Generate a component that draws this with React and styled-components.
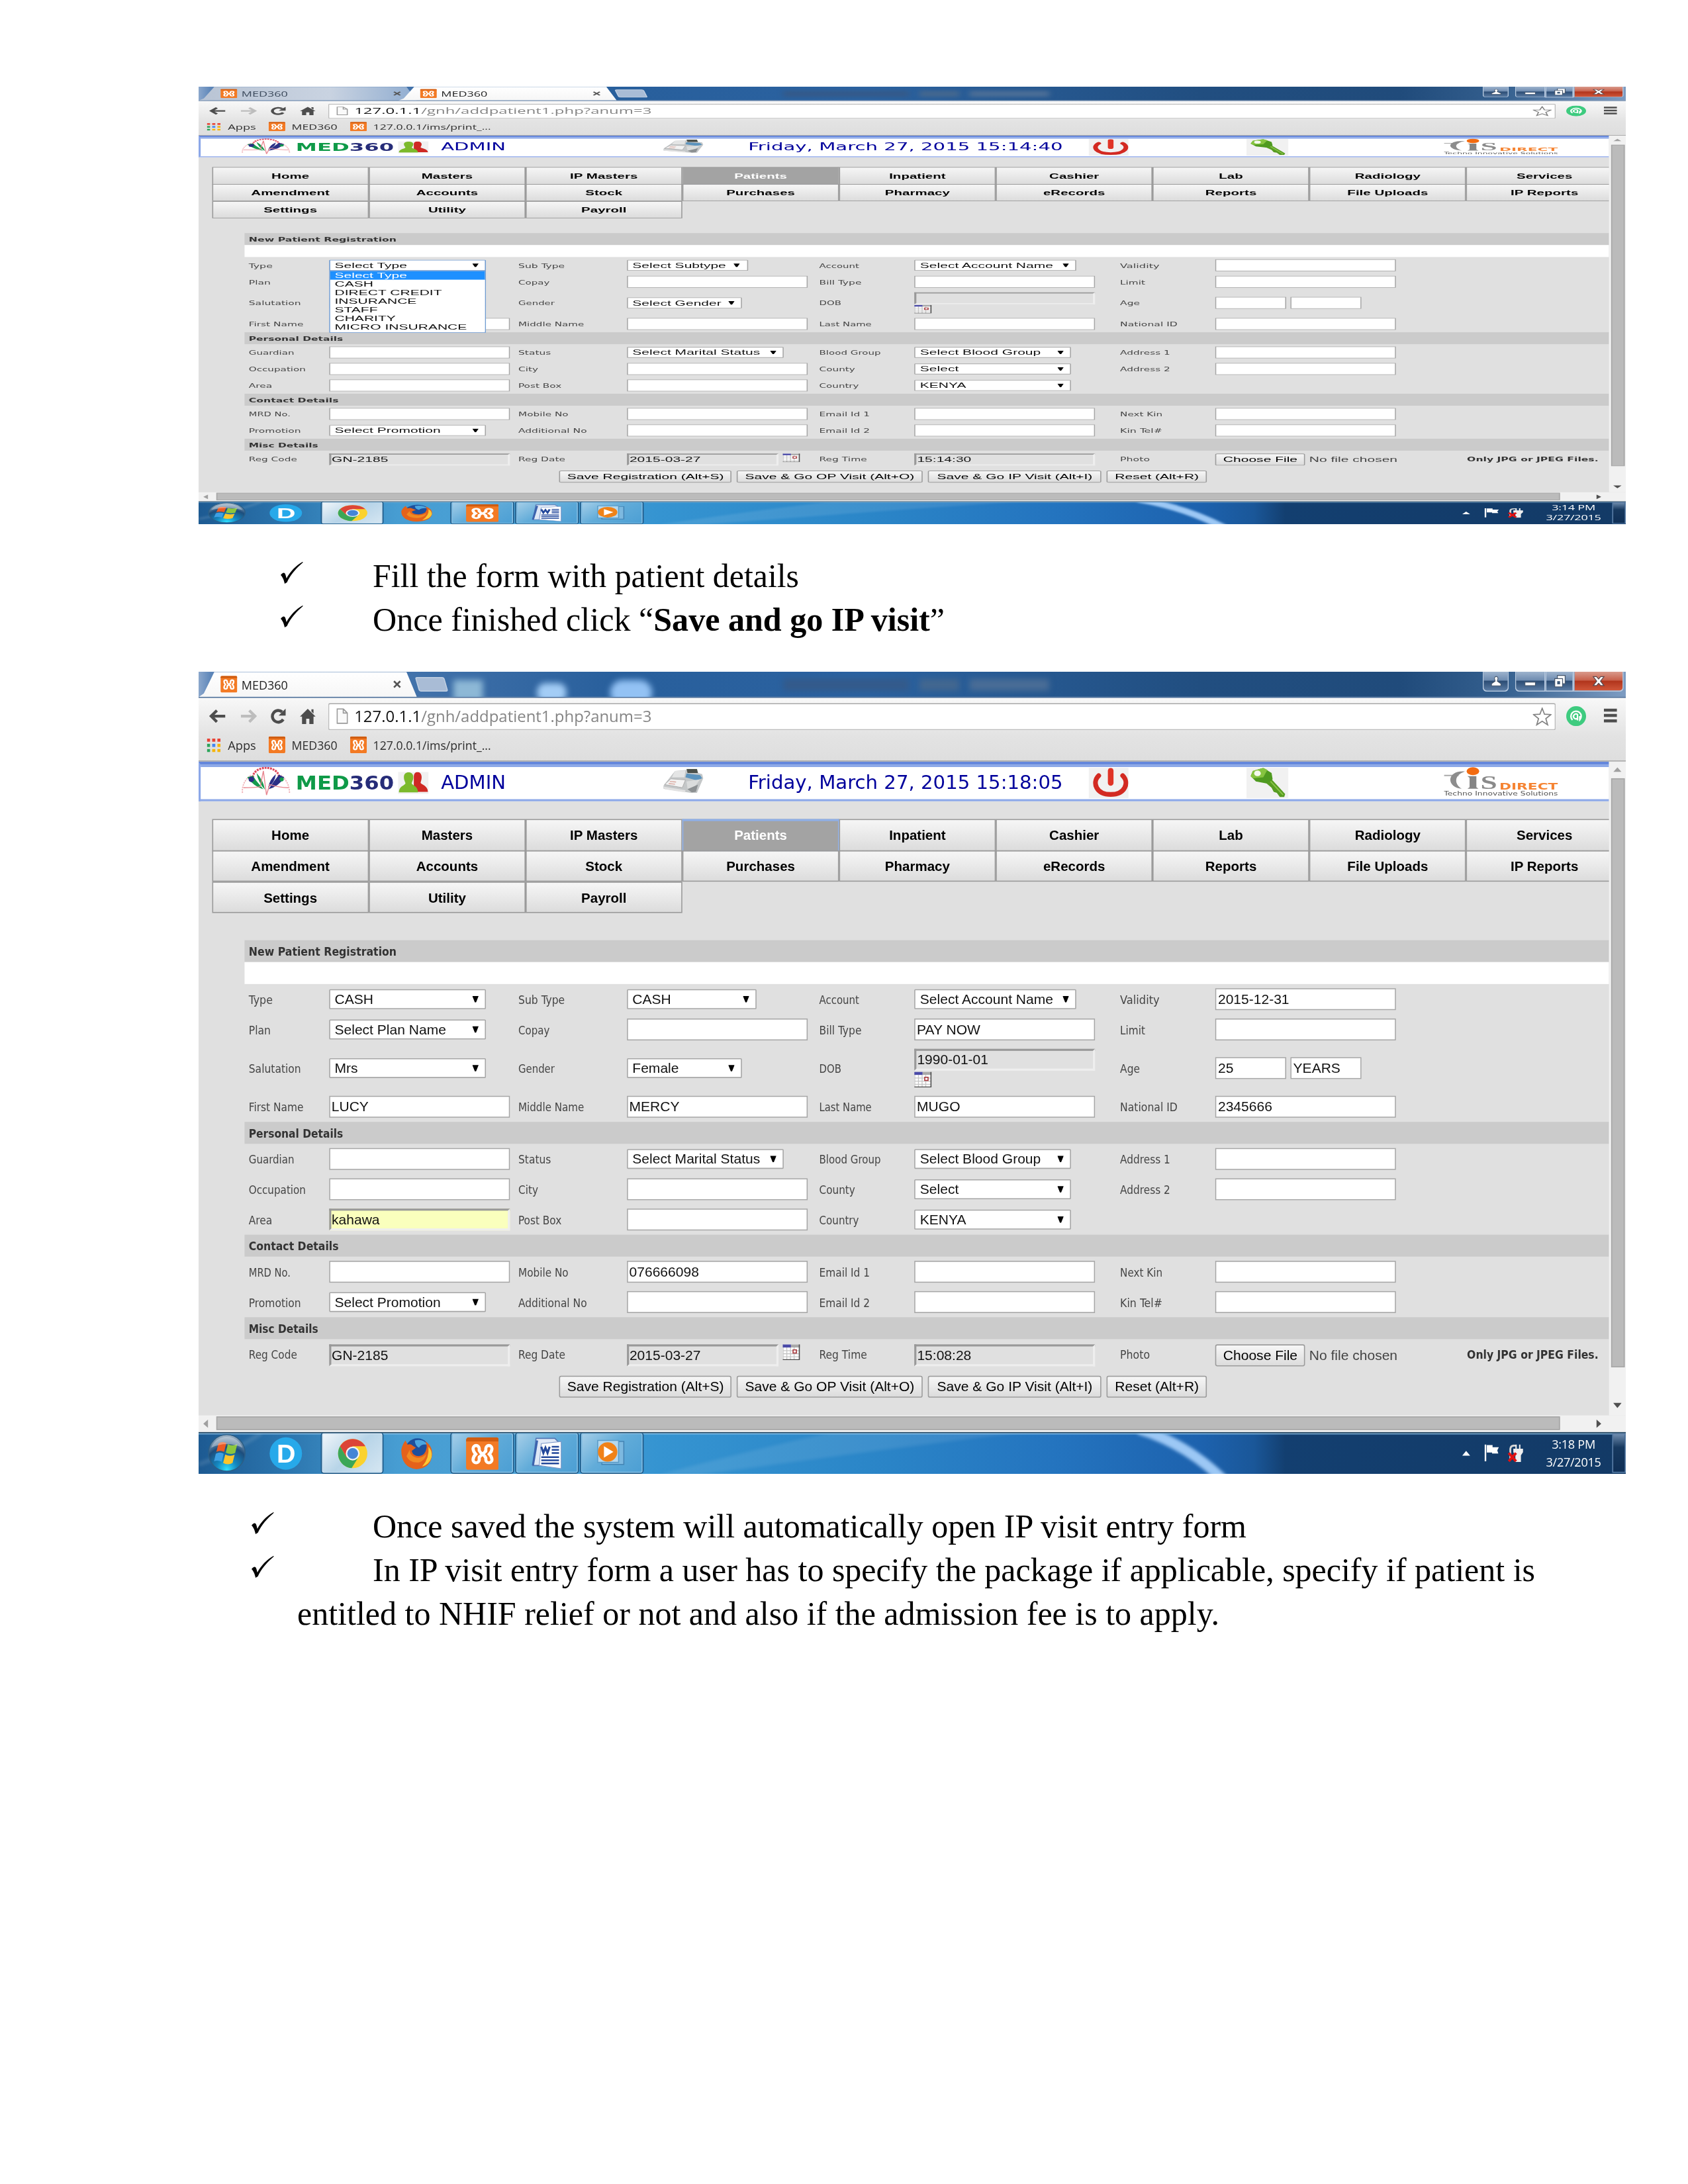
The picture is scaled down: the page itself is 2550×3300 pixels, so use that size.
import React, { useLayoutEffect, useRef } from "react";
import styled, { createGlobalStyle, css } from "styled-components";

const UI = '"Open Sans", "Noto Sans", sans-serif';
const ARIAL = '"Liberation Sans", Arial, sans-serif';
const TAHOMA = '"DejaVu Sans Condensed", "DejaVu Sans", sans-serif';
const VERDANA = '"DejaVu Sans", Verdana, sans-serif';

const GlobalStyle = createGlobalStyle`
  body { margin: 0; background: #fff; }
  *, *::before, *::after { box-sizing: border-box; }
  svg { display: block; }
`;

/* ---------- text fitted to a given width ---------- */
const FitBox = styled.span`
  display: inline-block;
  flex: none;
  width: ${(p) => p.$w}px;
  white-space: nowrap;
`;
const FitInner = styled.span`
  display: inline-block;
  transform-origin: 0 50%;
`;
function Fit({ w, children }) {
  const outer = useRef(null);
  const inner = useRef(null);
  useLayoutEffect(() => {
    inner.current.style.transform = "none";
    const ratio =
      outer.current.getBoundingClientRect().width /
      inner.current.getBoundingClientRect().width;
    inner.current.style.transform = `scaleX(${ratio})`;
  });
  return (
    <FitBox ref={outer} $w={w}>
      <FitInner ref={inner}>{children}</FitInner>
    </FitBox>
  );
}

/* ---------- document page ---------- */
const Page = styled.main`
  width: 2550px;
  height: 3300px;
  padding: 131px 0 0 300px;
  background: #fff;
  overflow: hidden;
`;
const Frame = styled.section`
  width: 2156px;
  height: ${(p) => p.$h}px;
  overflow: hidden;
`;
const Screen = styled.div`
  width: 1366px;
  height: 768px;
  display: flex;
  flex-direction: column;
  transform-origin: 0 0;
  transform: scale(${2156 / 1366}, ${(p) => p.$h / 768});
  background: #e0e0e0;
  line-height: normal;
`;
const Notes = styled.div`
  margin: ${(p) => p.$mt}px 0 ${(p) => p.$mb}px;
  font: 50px/66.2px "Liberation Serif", "Times New Roman", serif;
  color: #000;
`;
const Note = styled.div`
  display: flex;
  padding-left: ${(p) => p.$indent}px;
  height: 66.2px;
`;
const Mark = styled.div`
  width: ${(p) => p.$w}px;
  padding-top: 12px;
`;
const Tick = () => (
  <svg width="35" height="33" viewBox="0 0 35 33">
    <path d="M0 20C2 17 4.500 15.500 6 17C7.300 18.500 7.800 21 8.800 25C14 15 23 5.500 33 0L33.800 .8C24 9 15 19 9.500 31L6 33C5 28 3 22.500 0 20Z" />
  </svg>
);

/* ---------- title bar and tabs ---------- */
const TitleBar = styled.div`
  position: relative;
  flex: none;
  height: 25.300px;
  display: flex;
  align-items: flex-end;
  justify-content: space-between;
  overflow: hidden;
  border-bottom: 1px solid #4c6f9a;
  background: linear-gradient(90deg, #8ba7cc 0, #5c85b8 12px, #285f9c 400px, #2b62a0 640px, #214e80 960px, #204b7b 1150px, #35608f 1250px, #7d9cc2 1366px);
`;
const Tabs = styled.div`
  display: flex;
  z-index: 1;
`;
const Tab = styled.div`
  width: 209px;
  height: 24px;
  margin-right: -17.700px;
  padding: 0 15.500px 0 20.500px;
  display: flex;
  align-items: center;
  font: 12px ${UI};
  color: ${(p) => (p.$on ? "#222" : "#3c4a5c")};
  background: ${(p) =>
    p.$on ? "linear-gradient(#fff, #f6f6f6)" : "linear-gradient(90deg, #b9c4d4, #c9d3e1 60%, #8facd0)"};
  clip-path: polygon(15px 0, 199px 0, 209px 100%, 0 100%, 5px 85%);
  z-index: ${(p) => (p.$on ? 1 : 0)};
`;
const TabTitle = styled.span`
  flex: 1;
  margin-left: 4px;
`;
const NewTab = styled.div`
  width: 28px;
  height: 14px;
  margin: 5px 0 0 17.500px;
  background: #a9bcd6;
  border: 1px solid #c2d0e2;
  border-radius: 2px;
  transform: skewX(16deg);
`;
const Ghost = styled.div`
  position: absolute;
  left: ${(p) => p.$x}px;
  top: ${(p) => p.$y}px;
  width: ${(p) => p.$w}px;
  height: ${(p) => p.$h}px;
  background: ${(p) => p.$c};
  border-radius: ${(p) => p.$r || 0}px;
  filter: blur(3px);
`;
const WindowButtons = styled.div`
  position: absolute;
  right: 2px;
  top: 0;
  height: 18.600px;
  display: flex;
`;
const WinButton = styled.div`
  width: ${(p) => p.$w}px;
  margin-right: ${(p) => p.$gap || 0}px;
  display: flex;
  align-items: center;
  justify-content: center;
  border: 1px solid #b9cadf;
  border-top: 0;
  border-radius: ${(p) => p.$r};
  background: ${(p) =>
    p.$red
      ? "linear-gradient(#d99a8c 0, #c8614c 45%, #b1341c 50%, #d0573a)"
      : "linear-gradient(#9db3cd 0, #6f8cb0 45%, #2b4c74 50%, #5b7ca4)"};
`;

/* ---------- toolbar and bookmarks ---------- */
const Toolbar = styled.div`
  flex: none;
  height: 60.300px;
  border-bottom: 1.500px solid #a0a0a0;
  background: linear-gradient(#f8f8f8, #e3e3e3 36px, #dedede);
`;
const NavRow = styled.div`
  height: 34px;
  display: grid;
  grid-template-columns: 30px 28.200px 29.300px 26.700px 1175.700px 9.300px 36.300px 13px;
  align-items: center;
  padding-left: 9.500px;
`;
const AddressBar = styled.div`
  height: 26.500px;
  margin-top: 1px;
  padding: 0 3px 0 7px;
  display: flex;
  align-items: center;
  border: 1px solid #bcbcbc;
  border-top-color: #a2a2a2;
  border-radius: 2px;
  background: #fff;
  font: 15.300px ${UI};
  color: #858585;
  b { font-weight: 400; color: #111; }
`;
const Url = styled.div`
  flex: 1;
  margin: -1px 0 0 6.800px;
`;
const Bookmarks = styled.div`
  display: flex;
  align-items: center;
  height: 22px;
  padding-left: 8.200px;
  font: 12px ${UI};
  color: #2c2c2c;
`;
const Bookmark = styled.div`
  display: flex;
  align-items: center;
  gap: ${(p) => p.$gap || 5.6}px;
  margin-right: 12.400px;
`;

/* ---------- page area ---------- */
const Viewport = styled.div`
  flex: none;
  height: 626.100px;
  display: flex;
`;
const Content = styled.div`
  width: 1350px;
  overflow: hidden;
`;
const Banner = styled.div`
  height: 38px;
  display: grid;
  grid-template-columns: 51.800px 97.800px 41px 212.800px 81.600px 326.500px 150.300px 189px 109px;
  align-items: center;
  padding-left: 39px;
  border-left: 2px solid #8ca8e8;
  border-top: 3.500px solid #6487dc;
  border-bottom: 2.600px solid ${(p) => (p.$soft ? "#a5b9ee" : "#8ca8e8")};
  box-shadow: inset 0 2.200px #8ca8e8;
  background-color: #fff;
  font: 18px ${VERDANA};
  color: #00009c;
`;
const Brand = styled.div`
  font: bold 17.500px ${VERDANA};
  color: #262c78;
  padding-top: 3px;
  i { font-style: normal; color: #0f9a48; }
`;
const IconPlate = styled.div`
  width: ${(p) => p.$w}px;
  height: ${(p) => p.$h || 29}px;
  margin-top: 2px;
  display: flex;
  align-items: center;
  justify-content: ${(p) => (p.$end ? "flex-end" : "center")};
  background: #f1f1f1;
`;
const Menu = styled.nav`
  margin: 17.500px 0 26.500px 12.500px;
  width: 1352px;
  display: grid;
  grid-template-columns: repeat(9, 150.050px);
  grid-auto-rows: 29.900px;
`;
const MenuItem = styled.div`
  margin: 0 -0.600px -0.600px 0;
  display: flex;
  align-items: center;
  justify-content: center;
  border: 1.200px solid #9a9a9a;
  font: bold 13px ${ARIAL};
  color: #000;
  background: linear-gradient(#f6f6f6, #dcdcdc);
  ${(p) =>
    p.$on &&
    css`
      color: #fff;
      background: #a3a3a3;
      border-color: ${p.$focus ? "#8fb0e8" : "#a9a9a9"};
      border-top-width: ${p.$focus ? 2.5 : 1.2}px;
      border-bottom-color: #8a93a6;
    `}
`;
const Form = styled.div`
  margin-left: 44px;
  font: 11px ${TAHOMA};
  color: #454545;
`;
const Section = styled.div`
  height: 20.900px;
  padding: 0.800px 0 0 4px;
  display: flex;
  align-items: center;
  background: #cbcbcb;
  font-weight: bold;
  color: #333;
`;
const Blank = styled.div`
  height: 20.900px;
  background: #fff;
`;
const Row = styled.div`
  height: ${(p) => p.$h || 29.1}px;
  display: grid;
  grid-template-columns: 81px 177px 108px 180px 95.300px 193px 95.200px 237px 139px;
  align-items: center;
`;
const Label = styled.div`
  padding: 1.200px 0 0 4px;
`;
const Cell = styled.div`
  position: relative;
  display: flex;
  flex-direction: ${(p) => (p.$stack ? "column" : "row")};
  align-items: ${(p) => (p.$top || p.$stack ? "flex-start" : "center")};
  gap: ${(p) => (p.$stack ? "1px" : "4px")};
  font: 13.330px ${ARIAL};
  color: #111;
`;
const Input = styled.div`
  width: ${(p) => p.$w || 172.8}px;
  height: 20.900px;
  padding-left: 1.200px;
  display: flex;
  align-items: center;
  border: 1.200px solid #a6a6a6;
  background: #fff;
  ${(p) =>
    p.$inset &&
    css`
      border: 2px solid #999;
      border-right-color: #eee;
      border-bottom-color: #eee;
      padding-left: 0.400px;
      background: ${p.$fill || "#e0e0e0"};
    `}
`;
const SelectBox = styled.div`
  width: ${(p) => p.$w}px;
  height: 18.800px;
  padding: 0 6.500px 0 4.200px;
  display: flex;
  align-items: center;
  justify-content: space-between;
  border: 1.100px solid ${(p) => (p.$open ? "#6f9bd1" : "#a6a6a6")};
  border-radius: 1px;
  background: #fff;
  white-space: nowrap;
`;
const Options = styled.div`
  position: absolute;
  left: 0;
  top: 19px;
  z-index: 5;
  width: 150px;
  padding-bottom: 1px;
  border: 1px solid #6f9bd1;
  background: #fff;
`;
const Option = styled.div`
  height: 15.050px;
  line-height: 15.050px;
  padding-left: 4.200px;
  white-space: nowrap;
  color: ${(p) => (p.$on ? "#fff" : "#111")};
  background: ${(p) => (p.$on ? "#1e90ff" : "#fff")};
`;
const Button = styled.div`
  width: ${(p) => p.$w}px;
  height: 20.900px;
  display: flex;
  align-items: center;
  justify-content: center;
  border: 1.200px solid #9c9c9c;
  border-radius: 2px;
  background: linear-gradient(#f7f7f7, #dcdcdc);
  font: 13.330px ${ARIAL};
  color: #000;
  white-space: nowrap;
`;
const Actions = styled.div`
  display: flex;
  gap: 4.500px;
  padding: 4.500px 0 0 301.300px;
`;
const FileStatus = styled.span`
  color: #444;
  white-space: nowrap;
`;
const Strong = styled.div`
  padding: 1.200px 0 0 4px;
  font: bold 11px ${TAHOMA};
  color: #333;
`;

/* ---------- scroll bars ---------- */
const VScroll = styled.div`
  width: 16px;
  display: flex;
  flex-direction: column;
  align-items: center;
  background: #f1f1f1;
`;
const VThumb = styled.div`
  width: 13px;
  height: 564px;
  margin: 6px 0 33px;
  border: 1px solid #a6a6a6;
  background: #bbb;
`;
const HScroll = styled.div`
  flex: none;
  height: 16px;
  display: flex;
  align-items: center;
  padding-left: 2.500px;
  background: #f1f1f1;
`;
const HThumb = styled.div`
  width: 1285.500px;
  height: 12.800px;
  margin: 0 34px 0 6.500px;
  border: 1px solid #a6a6a6;
  background: #bbb;
`;

/* ---------- taskbar ---------- */
const Taskbar = styled.div`
  position: relative;
  flex: 1;
  display: flex;
  align-items: center;
  overflow: hidden;
  border-top: 1.600px solid #1f4460;
  background: linear-gradient(90deg, #1d5a92 0, #2b74ad 80px, #479dd2 190px, #4ba2d6 320px, #3594d1 440px, #2b86c8 640px, #2474bf 820px, #1d62ae 960px, #1a5799 1010px, #133f70 1040px, #133a66 1366px);
`;
const TaskGlow = styled.svg`
  position: absolute;
  left: 0;
  top: 0;
`;
const TaskItem = styled.div`
  position: relative;
  width: ${(p) => p.$w}px;
  height: 38px;
  margin-right: ${(p) => p.$gap || 0}px;
  display: flex;
  align-items: center;
  justify-content: center;
  ${(p) =>
    p.$tile &&
    css`
      border: 1px solid ${p.$active ? "#dbeaf5" : "#8cc3e6"};
      outline: 0.600px solid #1d5683;
      border-radius: 2px;
      background: ${p.$active
        ? "linear-gradient(135deg, #f1f6fa, #b7d4e8 50%, #d5e6f2)"
        : "linear-gradient(135deg, #a5cee8, #62acd9 45%, #4c9fd4)"};
    `}
`;
const Tray = styled.div`
  position: relative;
  flex: 1;
  display: flex;
  align-items: center;
  justify-content: flex-end;
`;
const Clock = styled.div`
  width: 69px;
  margin-left: 13px;
  padding-top: 1px;
  text-align: center;
  font: 11.500px/16.900px ${UI};
  letter-spacing: -0.200px;
  color: #fff;
`;
const ShowDesktop = styled.div`
  width: 13.500px;
  height: 38px;
  margin-left: 2px;
  border: 1px solid #5b7fa8;
  background: linear-gradient(#6f8cae, #17395f 35%, #0f2f56);
`;

/* ---------- icons ---------- */
const Xampp = ({ s = 16 }) => (
  <svg width={s} height={s} viewBox="0 0 16 16">
    <rect width="16" height="16" rx="1.400" fill="#f37a24" />
    <path d="M0 1.400A1.400 1.400 0 0 1 1.400 0H14.600A1.400 1.400 0 0 1 16 1.400V2H0Z" fill="#d05c10" />
    <path
      d="M6.400 6.400V5.500a1.500 1.500 0 0 0-3 0c0 1.200.5 1.900 1.300 2.700-.8.800-1.300 1.500-1.300 2.700a1.500 1.500 0 0 0 3 0V9.600M9.600 6.800V5.500a1.500 1.500 0 0 1 3 0c0 1.200-.5 1.900-1.300 2.700.8.800 1.300 1.500 1.300 2.700a1.500 1.500 0 0 1-3 0V10M6.400 6.300C7 8.200 9 8.200 9.600 10.100M6.400 10C7 8.200 9 8.200 9.600 6.300"
      fill="none" stroke="#fff" strokeWidth="1.500" strokeLinecap="round"
    />
  </svg>
);
const Cross = () => (
  <svg width="8" height="8" viewBox="0 0 8 8">
    <path d="M1 1L7 7M7 1L1 7" stroke="#555" strokeWidth="1.700" />
  </svg>
);
const Arrow = ({ back }) => (
  <svg width="16" height="13" viewBox="0 0 16 13">
    <path
      d={back ? "M7.500 1L2 6.500L7.500 12M2.500 6.500H15.500" : "M8.500 1L14 6.500L8.500 12M13.500 6.500H.5"}
      fill="none" stroke={back ? "#4d4d4d" : "#bdbdbd"} strokeWidth="2.700"
    />
  </svg>
);
const Reload = () => (
  <svg width="16" height="15" viewBox="0 0 16 15">
    <path d="M13 10.600A5.600 5.600 0 1 1 12 3.500" fill="none" stroke="#4d4d4d" strokeWidth="2.800" />
    <path d="M15.300 .3V7H8.600Z" fill="#4d4d4d" />
  </svg>
);
const HomeIcon = () => (
  <svg width="15" height="15" viewBox="0 0 15 15">
    <path d="M7.500 .5L15 8H13V15H9V10H6V15H2V8H0ZM11 1H13V5L11 3Z" fill="#4d4d4d" />
  </svg>
);
const Doc = () => (
  <svg width="11" height="15" viewBox="0 0 11 15">
    <path d="M.6 .6H6.500L10.400 4.500V14.400H.6ZM6.500 .6V4.500H10.400" fill="#fafafa" stroke="#9a9a9a" strokeWidth="1.100" />
  </svg>
);
const StarIcon = () => (
  <svg width="18" height="18" viewBox="0 0 18 18">
    <path d="M9 1L11.200 6.700L17.300 7L12.500 10.800L14.200 16.800L9 13.400L3.800 16.800L5.500 10.800L.7 7L6.800 6.700Z" fill="#fff" stroke="#828282" strokeWidth="1.100" />
  </svg>
);
const GreenDot = () => (
  <svg width="19" height="19" viewBox="0 0 19 19">
    <circle cx="9.500" cy="9.500" r="9.500" fill="#3ecb7f" />
    <path d="M6 13.200A4.900 4.900 0 1 1 13 13V9.500" fill="none" stroke="#fff" strokeWidth="1.500" />
    <path d="M10.800 7.500V13.500M10.800 8A2.300 2.300 0 1 0 10.800 11.500" fill="none" stroke="#fff" strokeWidth="1.400" />
  </svg>
);
const Burger = () => (
  <svg width="13" height="14" viewBox="0 0 13 14">
    <path d="M0 1.700H12.500M0 6.800H12.500M0 12H12.500" stroke="#4f4f4f" strokeWidth="2.900" />
  </svg>
);
const AppsIcon = () => (
  <svg width="13" height="13" viewBox="0 0 13 13">
    {["#e94335", "#e94335", "#e94335", "#2ca45a", "#4386f4", "#f6b50b", "#2ca45a", "#f6b50b", "#f6b50b"].map((c, i) => (
      <rect key={i} x={(i % 3) * 5} y={Math.floor(i / 3) * 5} width="3" height="3" fill={c} />
    ))}
  </svg>
);
const UserGlyph = () => (
  <svg width="10" height="10" viewBox="0 0 10 10">
    <path d="M3.300 2.500a1.700 2 0 1 1 3.400 0L6 5L9.500 7.500V9.500H.5V7.500L4 5Z" fill="#fff" stroke="#46566c" strokeWidth=".7" />
  </svg>
);
const MinGlyph = () => (
  <svg width="11" height="10" viewBox="0 0 11 10">
    <rect x=".5" y="6" width="10" height="3.300" fill="#fff" stroke="#46566c" strokeWidth=".7" />
  </svg>
);
const MaxGlyph = () => (
  <svg width="12" height="12" viewBox="0 0 12 12">
    <path d="M3.500 .5H11V8.500H8.500V11.500H1V3.500H3.500Z" fill="#fff" stroke="#46566c" strokeWidth=".8" />
    <rect x="3.400" y="6" width="2.700" height="3" fill="#3d5878" />
    <path d="M3.500 3.500H8.500V8.500" fill="none" stroke="#46566c" strokeWidth=".8" />
  </svg>
);
const CloseGlyph = () => (
  <svg width="12" height="10" viewBox="0 0 12 10">
    <path d="M.8 .7H4L6 3L8 .7H11.200L7.800 5L11.200 9.300H8L6 7L4 9.300H.8L4.200 5Z" fill="#fff" stroke="#5c4a50" strokeWidth=".8" />
  </svg>
);
const Caret = () => (
  <svg width="6" height="7" viewBox="0 0 6 7">
    <path d="M0 .5H6L3.600 6.500H2.400Z" fill="#000" />
  </svg>
);
const Calendar = () => (
  <svg width="16.500" height="15.200" viewBox="0 0 16.500 15.200">
    <rect width="16.500" height="15.200" fill="#fff" />
    <path d="M.5 0V15M4 3V15M7.500 3V15M11 3V15M0 6H16M0 9H16M0 12H16" stroke="#c4c4c4" strokeWidth=".8" />
    <rect width="8" height="3" fill="#4a4aa8" />
    <rect x="8" width="8.500" height="3" fill="#a9a9a9" />
    <rect x="10" y="5.300" width="3.200" height="3" fill="#fff" stroke="#a8383c" />
    <path d="M16 0V14.700H0" fill="none" stroke="#4a4a4a" />
  </svg>
);
const MedLogo = () => (
  <svg width="47" height="28" viewBox="0 0 47 28">
    <path d="M11 10A12.500 9 0 0 1 36 10" fill="none" stroke="#e0475a" strokeWidth="2" strokeDasharray="1.800 .8" />
    <path d="M1 25Q0 15 9 8M46 25Q46 15 38 8" fill="none" stroke="#f0b4ba" strokeWidth="1.200" strokeDasharray="1.500 .8" />
    <path d="M5.500 10L11 8.500L14 13L21 21.500Q12 19 5.500 10Z" fill="#159a4e" />
    <path d="M14.500 6Q21 13 22.500 22Q16 15 14.500 6Z" fill="#159a4e" />
    <path d="M41 10L36 7.500L31 14L26 21.500Q36 18.500 41 10Z" fill="#2b2f86" />
    <path d="M33 7Q27 12 25.500 20Q32 15 33 7Z" fill="#2b2f86" />
    <circle cx="9.500" cy="12" r="2.600" fill="#2b2f86" />
    <circle cx="38.500" cy="12" r="2" fill="#159a4e" />
    <path d="M2 20Q12 20 18 19L21 4L24 27L27 17Q36 20 45 20" fill="none" stroke="#e88690" strokeWidth=".9" />
  </svg>
);
const People = () => (
  <svg width="29" height="20" viewBox="0 0 29 20">
    <path d="M15 4.500C15 1.600 16.600 0 18.500 0C20.500 0 22.500 1.600 22.500 5C22.500 7.500 21.500 9 21.500 10.500C22 12 28.500 13 28.500 19H15Z" fill="#cf2a24" />
    <path d="M5.500 5C5.500 1.700 7.500 .3 10 .3S14.500 1.700 14.500 5C14.500 8 13 9.500 13 11C13.500 13 19 13.500 19 19.500H.7C.7 13.500 6.500 13 7 11C7 9.500 5.500 8 5.500 5Z" fill="#7cba2c" />
  </svg>
);
const Fax = () => (
  <svg width="40" height="24" viewBox="0 0 40 24">
    <path d="M12 2L24 1L38 5L39 9L33 23L27 23L1 19L1 16Z" fill="#c4c7c8" />
    <path d="M12 2L22 1.500L21 8L9 8Z" fill="#e4e5e5" />
    <path d="M23 0H33L34 4L24 4Z" fill="#4b504a" />
    <path d="M23 4.500L36 6L38 9L33 11L22 8Z" fill="#5b93bd" />
    <path d="M8 9.500L22 10.500L19 18L2 15Z" fill="#f3f3f3" stroke="#a9a9a9" strokeWidth=".6" />
    <path d="M7 12L13 12.600M6 14L12 14.700" stroke="#dcb0a8" strokeWidth="1" />
    <path d="M23 12L36 10L31 17L24 19Z" fill="#dadcdc" />
    <path d="M24 19.500L34 15L32 22L28 22.500Z" fill="#8c9092" />
    <path d="M1 17L22 20.500L21.500 22.500L2 19.500Z" fill="#e2e2e2" />
  </svg>
);
const Power = () => (
  <svg width="34" height="28" viewBox="0 0 34 28">
    <path d="M5.500 7.500C-1 14 3 25.500 17 25.500S35 14 28.500 7.500" fill="none" stroke="#d32a22" strokeWidth="4.600" strokeLinecap="round" />
    <path d="M17 2.700V14.500" stroke="#e03427" strokeWidth="5.400" strokeLinecap="round" />
  </svg>
);
const Key = () => (
  <svg width="36" height="28" viewBox="0 0 36 28">
    <path d="M22 11L35 25L34 28H30L27 24L24 23L22 19L16 14Z" fill="#579c22" />
    <path d="M4 3L14 0L22 5L23 11L17 15L7 13L2 8Z" fill="#4f9a20" />
    <path d="M4 3L14 0L18 2L14 9L4 10L2 8Z" fill="#86c440" />
    <ellipse cx="8.500" cy="5.300" rx="3.200" ry="2.700" fill="#f4f9ee" />
    <path d="M21 13L33 26" stroke="#8cc64a" strokeWidth="1.200" />
  </svg>
);
const CisLogo = () => (
  <svg width="110" height="29" viewBox="0 0 110 29">
    <path d="M0 8.300H14" stroke="#a9a9a9" strokeWidth="1.200" />
    <path d="M20 4.500C2 3 2 20 17 21C10 17 9 8 20 4.500Z" fill="#8d8d8d" />
    <ellipse cx="27.700" cy="4.200" rx="6" ry="3.800" fill="#f36b10" />
    <path d="M22.500 9H31V19.500L33 21H22.500L24.500 19.500V10.500Z" fill="#858585" />
    <text x="35" y="21" fontFamily="Liberation Serif, serif" fontWeight="bold" fontSize="19" textLength="16" lengthAdjust="spacingAndGlyphs" fill="#8a8a8a">S</text>
    <text x="53" y="21.500" fontFamily="DejaVu Sans, sans-serif" fontWeight="bold" fontSize="8.500" textLength="56" lengthAdjust="spacingAndGlyphs" fill="#f58433">DIRECT</text>
    <text x="0" y="27.500" fontFamily="DejaVu Sans, sans-serif" fontSize="5.400" textLength="109" lengthAdjust="spacingAndGlyphs" fill="#555">Techno Innovative Solutions</text>
  </svg>
);
const Orb = () => (
  <svg width="36" height="36" viewBox="0 0 36 36">
    <defs>
      <radialGradient id="orb" cx=".5" cy=".95" r=".95">
        <stop offset="0" stopColor="#2fe0ff" />
        <stop offset=".3" stopColor="#1487c0" />
        <stop offset=".65" stopColor="#1d4d7c" />
        <stop offset="1" stopColor="#a9bccc" />
      </radialGradient>
    </defs>
    <circle cx="18" cy="18" r="17.500" fill="url(#orb)" stroke="#2d5f86" />
    <path d="M10 9Q13.500 6.500 17.500 8.500L15.500 17Q11.500 15 8 17Z" fill="#ec5a24" />
    <path d="M19 9.500Q23 12 28 9.500L26 18Q22 20 17 17.700Z" fill="#8cc63e" />
    <path d="M7.500 18.700Q11.500 16.500 15 18.700L13.200 26.500Q9.500 24.500 5.800 26Z" fill="#3da0e4" />
    <path d="M16.500 19.500Q21 22 25.500 19.700L23.500 27.500Q19 30 14.500 27.500Z" fill="#fdc52c" />
    <path d="M3 13A16 16 0 0 1 33 13Q18 6 3 13Z" fill="#fff" opacity=".35" />
  </svg>
);
const DIcon = styled.div`
  width: 31px;
  height: 31px;
  border-radius: 50%;
  display: flex;
  align-items: center;
  justify-content: center;
  background: #27a9ea;
  color: #fff;
  font: bold 25px/1 ${ARIAL};
`;
const Chrome = () => (
  <svg width="29" height="29" viewBox="0 0 29 29">
    <circle cx="14.500" cy="14.500" r="14" fill="#fbd22e" />
    <path d="M2.400 7.500A14 14 0 0 1 26.600 7.500H14.500L8.500 18Z" fill="#dc4437" />
    <path d="M2.400 7.500A14 14 0 0 0 13.500 28.500L20 18H8.500Z" fill="#3ba757" />
    <circle cx="14.500" cy="14.500" r="6.600" fill="#f4f4f4" />
    <circle cx="14.500" cy="14.500" r="5.200" fill="#4585d6" />
  </svg>
);
const Firefox = () => (
  <svg width="31" height="31" viewBox="0 0 31 31">
    <circle cx="16.500" cy="13" r="12" fill="#1d4f9c" />
    <path d="M14 3Q22 1 26 7Q20 6 18 10Q14 8 14 3Z" fill="#4ba6e0" />
    <path d="M1 12Q2 7 5 3L7 7Q10 6 12 8L15 10L11 13Q12 18 18 18Q24 17 25 11Q26 8 24 4Q31 8 30.500 17Q29 30 15.500 30.500Q1 29 1 12Z" fill="#e4621b" />
    <path d="M27 9Q31 13 30 19Q28 26 21 28Q28 20 27 9Z" fill="#fbc834" />
    <path d="M6 18Q9 25 18 24Q24 22 25 16Q20 21 14 19Q9 17 9 12Z" fill="#f08a22" />
  </svg>
);
const Word = () => (
  <svg width="30" height="31" viewBox="0 0 30 31">
    <path d="M5 1H23L26 4V27H2Z" fill="#dfe8f6" stroke="#5577b4" />
    <path d="M10 6L29 4V30L8 27Z" fill="#fff" stroke="#7f9acb" strokeWidth=".7" />
    <path d="M10 9L12 15L14 10L16 15L18 9" fill="none" stroke="#23489b" strokeWidth="2" />
    <path d="M20 9H27M20 12H27M20 15H27M10 19H27M10 22H27M10 25H27" stroke="#23489b" strokeWidth="1.600" />
    <path d="M2 27L6 3" stroke="#3b63ae" strokeWidth="2" />
  </svg>
);
const MediaPlayer = () => (
  <svg width="30" height="26" viewBox="0 0 30 26">
    <path d="M6 2H27V24H6Z" fill="#7db9e0" stroke="#4384b4" />
    <path d="M2 1H22V22H2Z" fill="#b4d8ef" stroke="#5b9cc8" />
    <circle cx="11.500" cy="12" r="9.300" fill="#f08218" />
    <path d="M8 6.500L17 12L8 17.500Z" fill="#fff" />
  </svg>
);
const TrayIcons = () => (
  <svg width="60" height="18" viewBox="0 0 60 18">
    <path d="M.5 11.500H8L4.200 7Z" fill="#fff" />
    <path d="M22.700 1V17" stroke="#fff" strokeWidth="1.500" />
    <path d="M24 1.500H29.500V3.500H35.500L34 6.500L35 9.500H29V8.500H24Z" fill="#fff" />
    <path d="M46.500 15V5Q47 1.500 51 2H52" fill="none" stroke="#d5d5d5" strokeWidth="1.800" />
    <path d="M52 1V5M55.500 1V5M50 5.500H58V8L56 11V17H52V11L50 8Z" fill="#eee" stroke="#eee" strokeWidth="1.300" />
    <path d="M45 9L52 17M52 9L45 17" stroke="#e01010" strokeWidth="2.500" />
  </svg>
);
const Tri = ({ d, c }) => (
  <svg width="8" height="8" viewBox="0 0 8 8">
    <path d={d} fill={c} />
  </svg>
);

/* ---------- form parts ---------- */
const Select = ({ w, children, open, options }) => (
  <>
    <SelectBox $w={w} $open={open}>
      <span>{children}</span>
      <Caret />
    </SelectBox>
    {open && (
      <Options>
        {options.map((o, i) => (
          <Option key={o} $on={i === 0}>{o}</Option>
        ))}
      </Options>
    )}
  </>
);
const L = ({ w, children }) => (
  <Label>
    <Fit w={w}>{children}</Fit>
  </Label>
);
const SectionTitle = ({ w, children }) => (
  <Section>
    <Fit w={w}>{children}</Fit>
  </Section>
);

const MENU = [
  "Home", "Masters", "IP Masters", "Patients", "Inpatient", "Cashier", "Lab", "Radiology", "Services",
  "Amendment", "Accounts", "Stock", "Purchases", "Pharmacy", "eRecords", "Reports", "File Uploads", "IP Reports",
  "Settings", "Utility", "Payroll",
];
const TYPES = ["Select Type", "CASH", "DIRECT CREDIT", "INSURANCE", "STAFF", "CHARITY", "MICRO INSURANCE"];

function Registration({ v }) {
  return (
    <Form>
      <SectionTitle w={141.5}>New Patient Registration</SectionTitle>
      <Blank />
      <Row>
        <L w={22.9}>Type</L>
        <Cell><Select w={150} open={v.open} options={TYPES}>{v.type}</Select></Cell>
        <L w={44.5}>Sub Type</L>
        <Cell><Select w={v.subW}>{v.sub}</Select></Cell>
        <L w={38.3}>Account</L>
        <Cell><Select w={155}>Select Account Name</Select></Cell>
        <L w={37.8}>Validity</L>
        <Cell><Input>{v.validity}</Input></Cell>
      </Row>
      <Row>
        <L w={21}>Plan</L>
        <Cell><Select w={150}>{v.plan}</Select></Cell>
        <L w={30}>Copay</L>
        <Cell><Input /></Cell>
        <L w={40.5}>Bill Type</L>
        <Cell><Input>{v.bill}</Input></Cell>
        <L w={24}>Limit</L>
        <Cell><Input /></Cell>
      </Row>
      <Row $h={45}>
        <L w={50}>Salutation</L>
        <Cell><Select w={150}>{v.salutation}</Select></Cell>
        <L w={34.8}>Gender</L>
        <Cell><Select w={110}>{v.gender}</Select></Cell>
        <L w={21.2}>DOB</L>
        <Cell $stack>
          <Input $inset>{v.dob}</Input>
          <Calendar />
        </Cell>
        <L w={19}>Age</L>
        <Cell>
          <Input $w={68}>{v.age}</Input>
          <Input $w={67.8}>{v.unit}</Input>
        </Cell>
      </Row>
      <Row>
        <L w={52.4}>First Name</L>
        <Cell><Input>{v.first}</Input></Cell>
        <L w={63}>Middle Name</L>
        <Cell><Input>{v.middle}</Input></Cell>
        <L w={50.2}>Last Name</L>
        <Cell><Input>{v.last}</Input></Cell>
        <L w={55}>National ID</L>
        <Cell><Input>{v.nid}</Input></Cell>
      </Row>
      <SectionTitle w={90.3}>Personal Details</SectionTitle>
      <Row $h={29}>
        <L w={43.6}>Guardian</L>
        <Cell><Input /></Cell>
        <L w={31.3}>Status</L>
        <Cell><Select w={150}>Select Marital Status</Select></Cell>
        <L w={59}>Blood Group</L>
        <Cell><Select w={150}>Select Blood Group</Select></Cell>
        <L w={48}>Address 1</L>
        <Cell><Input /></Cell>
      </Row>
      <Row $h={29}>
        <L w={54.6}>Occupation</L>
        <Cell><Input /></Cell>
        <L w={19}>City</L>
        <Cell><Input /></Cell>
        <L w={34.4}>County</L>
        <Cell><Select w={150}>Select</Select></Cell>
        <L w={48}>Address 2</L>
        <Cell><Input /></Cell>
      </Row>
      <Row $h={29}>
        <L w={22.5}>Area</L>
        <Cell>{v.area ? <Input $inset $fill="#faffbd">{v.area}</Input> : <Input />}</Cell>
        <L w={41.4}>Post Box</L>
        <Cell><Input /></Cell>
        <L w={38}>Country</L>
        <Cell><Select w={150}>KENYA</Select></Cell>
      </Row>
      <SectionTitle w={86}>Contact Details</SectionTitle>
      <Row>
        <L w={40}>MRD No.</L>
        <Cell><Input /></Cell>
        <L w={48}>Mobile No</L>
        <Cell><Input>{v.mobile}</Input></Cell>
        <L w={48.5}>Email Id 1</L>
        <Cell><Input /></Cell>
        <L w={40.5}>Next Kin</L>
        <Cell><Input /></Cell>
      </Row>
      <Row>
        <L w={50}>Promotion</L>
        <Cell><Select w={150}>Select Promotion</Select></Cell>
        <L w={65.7}>Additional No</L>
        <Cell><Input /></Cell>
        <L w={48.5}>Email Id 2</L>
        <Cell><Input /></Cell>
        <L w={40.5}>Kin Tel#</L>
        <Cell><Input /></Cell>
      </Row>
      <SectionTitle w={66.5}>Misc Details</SectionTitle>
      <Row $h={30}>
        <L w={46.3}>Reg Code</L>
        <Cell><Input $inset>GN-2185</Input></Cell>
        <L w={45}>Reg Date</L>
        <Cell $top>
          <Input $inset $w={145}>2015-03-27</Input>
          <Calendar />
        </Cell>
        <L w={45.8}>Reg Time</L>
        <Cell><Input $inset>{v.time}</Input></Cell>
        <L w={28.5}>Photo</L>
        <Cell>
          <Button $w={85.5}>Choose File</Button>
          <FileStatus>No file chosen</FileStatus>
        </Cell>
        <Strong><Fit w={125.8}>Only JPG or JPEG Files.</Fit></Strong>
      </Row>
      <Actions>
        <Button $w={165}>Save Registration (Alt+S)</Button>
        <Button $w={178.6}>Save &amp; Go OP Visit (Alt+O)</Button>
        <Button $w={166.6}>Save &amp; Go IP Visit (Alt+I)</Button>
        <Button $w={96.5}>Reset (Alt+R)</Button>
      </Actions>
    </Form>
  );
}

function BrowserScreen({ height, v }) {
  return (
    <Frame $h={height}>
      <Screen $h={height}>
        <TitleBar>
          <Tabs>
            {v.tabs.map((on, i) => (
              <Tab key={i} $on={on}>
                <Xampp />
                <TabTitle><Fit w={44.5}>MED360</Fit></TabTitle>
                <Cross />
              </Tab>
            ))}
            <NewTab />
          </Tabs>
          {v.blobs && (
            <>
              <Ghost $x={244} $y={8} $w={28} $h={20} $c="#8db8d6" />
              <Ghost $x={324} $y={11} $w={28} $h={18} $r={8} $c="#a3cdf6" />
              <Ghost $x={394} $y={8} $w={40} $h={24} $r={12} $c="#93c2f4" />
            </>
          )}
          <Ghost $x={560} $y={7} $w={120} $h={11} $c="#345a8a" />
          <Ghost $x={690} $y={7} $w={38} $h={11} $c="#43678f" />
          <Ghost $x={738} $y={7} $w={76} $h={11} $c="#4a6d96" />
          <WindowButtons>
            <WinButton $w={25} $gap={6} $r="0 0 4px 4px"><UserGlyph /></WinButton>
            <WinButton $w={29} $r="0 0 0 4px"><MinGlyph /></WinButton>
            <WinButton $w={27} $r="0"><MaxGlyph /></WinButton>
            <WinButton $w={48} $r="0 0 4px 0" $red><CloseGlyph /></WinButton>
          </WindowButtons>
        </TitleBar>
        <Toolbar>
          <NavRow>
            <Arrow back />
            <Arrow />
            <Reload />
            <HomeIcon />
            <AddressBar>
              <Doc />
              <Url><Fit w={284.6}><b>127.0.1.1</b>/gnh/addpatient1.php?anum=3</Fit></Url>
              <StarIcon />
            </AddressBar>
            <span />
            <GreenDot />
            <Burger />
          </NavRow>
          <Bookmarks>
            <Bookmark $gap={6.8}><AppsIcon /><Fit w={27}>Apps</Fit></Bookmark>
            <Bookmark><Xampp /><Fit w={43.8}>MED360</Fit></Bookmark>
            <Bookmark><Xampp /><Fit w={112.8}>127.0.0.1/ims/print_...</Fit></Bookmark>
          </Bookmarks>
        </Toolbar>
        <Viewport>
          <Content>
            <Banner $soft={v.open}>
              <MedLogo />
              <Brand><Fit w={94}><i>MED</i>360</Fit></Brand>
              <IconPlate $w={29.5} $h={21}><People /></IconPlate>
              <Fit w={62}>ADMIN</Fit>
              <Fax />
              <Fit w={301.2}>{v.date}</Fit>
              <IconPlate $w={38} $end><Power /></IconPlate>
              <IconPlate $w={40}><Key /></IconPlate>
              <CisLogo />
            </Banner>
            <Menu>
              {MENU.map((m) => (
                <MenuItem key={m} $on={m === "Patients"} $focus={!v.open}>{m}</MenuItem>
              ))}
            </Menu>
            <Registration v={v} />
          </Content>
          <VScroll>
            <svg width="8" height="10" viewBox="0 0 8 10"><path d="M0 10H8L4 5.500Z" fill="#a0a0a0" /></svg>
            <VThumb />
            <Tri d="M0 1H8L4 6Z" c="#505050" />
          </VScroll>
        </Viewport>
        <HScroll>
          <Tri d="M6 0V8L1.500 4Z" c="#a0a0a0" />
          <HThumb />
          <Tri d="M1 0V8L5.500 4Z" c="#505050" />
        </HScroll>
        <Taskbar>
          <TaskGlow width="1366" height="40" viewBox="0 0 1366 40">
            <defs>
              <filter id="soft" x="-20%" y="-20%" width="140%" height="140%">
                <feGaussianBlur stdDeviation="1.800" />
              </filter>
            </defs>
            <path d="M480 40Q620 20 830 -6L620 -4Q520 18 440 40Z" fill="#fff" opacity=".09" filter="url(#soft)" />
            <path d="M0 30Q30 20 60 0" stroke="#fff" strokeWidth="4" opacity=".12" fill="none" filter="url(#soft)" />
            <path d="M900 -4Q945 10 980 44" stroke="#9cc8f5" strokeWidth="10" fill="none" filter="url(#soft)" />
            <path d="M0 .8H1366" stroke="#8cc6ee" strokeWidth="1" opacity=".7" />
          </TaskGlow>
          <TaskItem $w={54.8}><Orb /></TaskItem>
          <TaskItem $w={58} $gap={5.6}><DIcon>D</DIcon></TaskItem>
          <TaskItem $w={58} $gap={3.5} $tile $active><Chrome /></TaskItem>
          <TaskItem $w={58} $gap={4.5}><Firefox /></TaskItem>
          <TaskItem $w={58.5} $gap={3.2} $tile><Xampp s={31.5} /></TaskItem>
          <TaskItem $w={58.8} $gap={3.2} $tile><Word /></TaskItem>
          <TaskItem $w={58.8} $tile><MediaPlayer /></TaskItem>
          <Tray>
            <TrayIcons />
            <Clock>{v.clock}<br />3/27/2015</Clock>
            <ShowDesktop />
          </Tray>
        </Taskbar>
      </Screen>
    </Frame>
  );
}

const FIRST = {
  tabs: [false, true],
  date: "Friday, March 27, 2015 15:14:40",
  clock: "3:14 PM",
  open: true,
  type: "Select Type",
  plan: "",
  sub: "Select Subtype",
  subW: 115.5,
  salutation: "",
  gender: "Select Gender",
  time: "15:14:30",
};
const SECOND = {
  tabs: [true],
  blobs: true,
  date: "Friday, March 27, 2015 15:18:05",
  clock: "3:18 PM",
  type: "CASH",
  plan: "Select Plan Name",
  sub: "CASH",
  subW: 124,
  validity: "2015-12-31",
  bill: "PAY NOW",
  salutation: "Mrs",
  gender: "Female",
  dob: "1990-01-01",
  age: "25",
  unit: "YEARS",
  first: "LUCY",
  middle: "MERCY",
  last: "MUGO",
  nid: "2345666",
  area: "kahawa",
  mobile: "076666098",
  time: "15:08:28",
};

export default function App() {
  return (
    <Page>
      <GlobalStyle />
      <BrowserScreen height={661} v={FIRST} />
      <Notes $mt={45} $mb={45.6}>
        <Note $indent={123.5}>
          <Mark $w={139}><Tick /></Mark>
          <Fit w={644}>Fill the form with patient details</Fit>
        </Note>
        <Note $indent={123.5}>
          <Mark $w={139}><Tick /></Mark>
          <Fit w={864}>Once finished click “<b>Save and go IP visit</b>”</Fit>
        </Note>
      </Notes>
      <BrowserScreen height={1212} v={SECOND} />
      <Notes $mt={46} $mb={0}>
        <Note $indent={79.5}>
          <Mark $w={183}><Tick /></Mark>
          <Fit w={1320}>Once saved the system will automatically open IP visit entry form</Fit>
        </Note>
        <Note $indent={79.5}>
          <Mark $w={183}><Tick /></Mark>
          <Fit w={1756}>In IP visit entry form a user has to specify the package if applicable, specify if patient is</Fit>
        </Note>
        <Note $indent={149}>
          <Fit w={1393}>entitled to NHIF relief or not and also if the admission fee is to apply.</Fit>
        </Note>
      </Notes>
    </Page>
  );
}
